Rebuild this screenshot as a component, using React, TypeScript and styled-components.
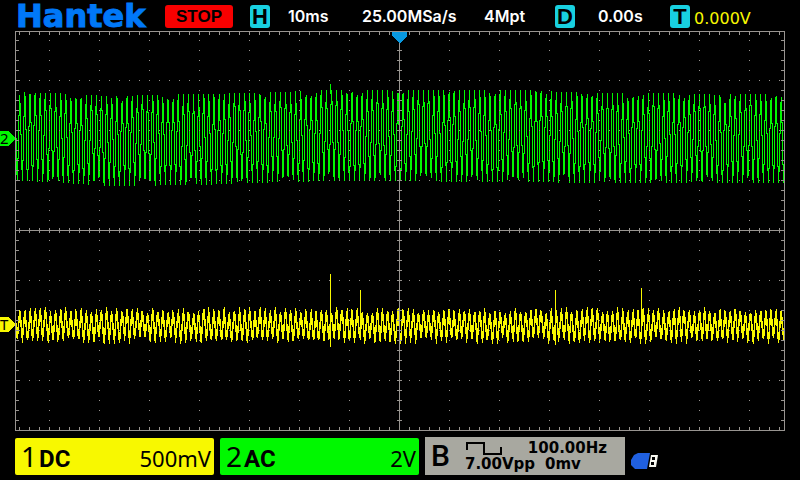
import React from "react";
import styled, { createGlobalStyle } from "styled-components";

const GlobalStyle = createGlobalStyle`
  * { box-sizing: border-box; }
  body { margin: 0; background: #000; }
  button { border: 0; margin: 0; padding: 0; cursor: pointer; }
`;

const Screen = styled.main`
  background: #000;
  color: #fff;
  font-family: Inter, sans-serif;
`;

const StatusBar = styled.header`
  display: grid;
  grid-template-columns: 149fr 85fr 38fr 74fr 122fr 71fr 43fr 72fr 24fr 106fr;
  align-items: center;
  justify-items: start;
  height: 30px;
  padding: 2px 0 0 16px;
  white-space: nowrap;
`;

const Brand = styled.span`
  color: #0078f8;
  font: bold 32px/40px "DejaVu Sans", sans-serif;
  -webkit-text-stroke: 1px #0078f8;
  margin: -6px 0;
`;

const RunButton = styled.button`
  width: 68px;
  height: 23px;
  border-radius: 3px;
  background: #f80000;
  color: #000;
  font: bold 17px/23px "Liberation Sans", sans-serif;
`;

const Badge = styled.span`
  width: 20px;
  height: 23px;
  border-radius: 3px;
  background: #18d0e0;
  color: #000;
  font: bold 22px/24px "Liberation Sans", sans-serif;
  display: flex;
  justify-content: center;
`;

const Reading = styled.span`
  font-size: 16px;
  font-weight: 600;
  line-height: 24px;
`;

const Level = styled.span`
  color: #f8f800;
  padding-top: 6px;
  font: 16px/20px "DejaVu Sans", sans-serif;
`;

const Plot = styled.svg`
  display: block;
  width: 100%;
  height: auto;
`;

const ChannelBar = styled.footer`
  display: grid;
  grid-template-columns: 199fr 199fr 200fr 163fr;
  gap: 6px;
  align-items: center;
  padding: 5px 6px 5px 15px;
`;

const Channel = styled.button<{ $color: string }>`
  display: flex;
  align-items: baseline;
  height: 37px;
  padding: 0 3px 0 6px;
  border-radius: 2px;
  background: ${(p) => p.$color};
  color: #000;
  font-family: "Noto Sans", sans-serif;
  line-height: 37px;
`;

const ChannelNumber = styled.span`
  font-size: 28px;
`;

const Coupling = styled.span`
  margin-left: 2px;
  font: bold 24px/37px "Liberation Sans Narrow", Roboto, sans-serif;
`;

const Scale = styled.span`
  margin-left: auto;
  font-size: 22px;
`;

const Generator = styled.section`
  display: flex;
  align-items: center;
  gap: 15px;
  height: 38px;
  padding-left: 6px;
  background: #a8a8a0;
  color: #000;
`;

const GeneratorName = styled.span`
  font: 500 30px/36px Roboto, sans-serif;
`;

const GeneratorInfo = styled.div`
  flex: 1;
  font: bold 15px/16px "DejaVu Sans", sans-serif;
  white-space: nowrap;
`;

const Frequency = styled.div`
  display: flex;
  justify-content: space-between;
  padding-right: 18px;
`;

const Output = styled.div`
  display: flex;
  gap: 10px;
`;

const UsbIcon = styled.svg`
  display: block;
  margin-top: 10px;
`;

const LEFT = 15;
const RIGHT = 784;
const PERIOD = 5.11;

const range = (from: number, to: number, step: number) => {
  const out: number[] = [];
  for (let v = from; v <= to; v += step) out.push(v);
  return out;
};

const noise = (x: number) => {
  const v = Math.sin(x * 127.1 + 11.7) * 43758.5453;
  return v - Math.floor(v);
};

const ENVELOPE = [
  [15, 92, 180], [50, 93, 181], [110, 96, 185], [200, 94, 184], [250, 93, 182],
  [330, 90, 180], [520, 90, 181], [590, 93, 182], [784, 94, 182],
];

const envelopeAt = (x: number) => {
  const i = Math.max(1, ENVELOPE.findIndex((e) => e[0] >= x));
  const a = ENVELOPE[i - 1];
  const b = ENVELOPE[i] || a;
  const t = Math.min(1, Math.max(0, (x - a[0]) / (b[0] - a[0])));
  return [a[1] + (b[1] - a[1]) * t, a[2] + (b[2] - a[2]) * t];
};

const carrier = (x: number) =>
  Math.max(-1, Math.min(1, 1.1 * Math.cos(((x - 19.3 + (noise(x + 900) - 0.5) * 0.3) * 2 * Math.PI) / PERIOD)));

const channel2 = (x: number) => {
  const [top, bottom] = envelopeAt(x);
  return (top + bottom) / 2 - (carrier(x) * (bottom - top)) / 2;
};

const channel1 = (x: number) =>
  325 - carrier(x) * 12 + (noise(x) - 0.5) * 7;

/* One vertical run per pixel column, from midpoint to midpoint of its neighbours. */
const trace = (sample: (x: number) => number, pad: number) =>
  range(LEFT + 1, RIGHT - 1, 1)
    .map((x) => {
      const y = sample(x);
      const before = (sample(x - 1) + y) / 2;
      const after = (sample(x + 1) + y) / 2;
      const top = Math.round(Math.min(before, y, after) - pad);
      const bottom = Math.round(Math.max(before, y, after) + pad);
      return `M${x} ${top}h1V${bottom + 1}h-1z`;
    })
    .join("");

const dot = (x: number, y: number, w = 1, h = 1) => `M${x} ${y}h${w}v${h}h${-w}z`;

const gridPath = [
  dot(15, 31, 770, 1), dot(15, 430, 770, 1), dot(15, 31, 1, 400), dot(784, 31, 1, 400),
  dot(399, 31, 1, 400), dot(15, 230, 770, 1),
  ...range(19, 779, 10).flatMap((x) => [
    dot(x, 32, 1, 3), dot(x, 427, 1, 3), dot(x, 228, 1, 5),
    ...[80, 130, 180, 280, 330, 380].map((y) => dot(x, y)),
  ]),
  ...range(40, 420, 10).flatMap((y) => [
    dot(16, y, 3, 1), dot(781, y, 3, 1), dot(397, y, 5, 1),
    ...range(49, 749, 50).map((x) => dot(x, y)),
  ]),
].join("");

const spikes = [dot(330, 274, 1, 73), dot(360, 290, 1, 50), dot(555, 290, 1, 55), dot(641, 288, 1, 50)].join("");

const Marker = ({ y, color, label }: { y: number; color: string; label: string }) => (
  <g>
    <path d={`M0 ${y - 7}h8l7 7v1l-7 7H0z`} fill={color} />
    <text x={0} y={y + 6} fontSize="15" fontFamily="Noto Sans, sans-serif" fill="#000">
      {label}
    </text>
  </g>
);

export default function App() {
  return (
    <>
      <GlobalStyle />
      <Screen>
        <StatusBar>
          <Brand>Hantek</Brand>
          <RunButton>STOP</RunButton>
          <Badge>H</Badge>
          <Reading>10ms</Reading>
          <Reading>25.00MSa/s</Reading>
          <Reading>4Mpt</Reading>
          <Badge>D</Badge>
          <Reading>0.00s</Reading>
          <Badge>T</Badge>
          <Level>0.000V</Level>
        </StatusBar>
        <Plot viewBox="0 30 800 402" role="img" aria-label="Waveforms" shapeRendering="crispEdges">
          <path d={trace(channel2, 0)} fill="#00f800" />
          <path d={dot(330, 84, 1, 10)} fill="#00f800" />
          <path d={trace(channel1, 3)} fill="#f8f800" />
          <path d={spikes} fill="#f8f800" />
          <path d={gridPath} fill="#989490" />
          <path d="M392 32h15v4l-7 7h-1l-7-7z" fill="#0898e0" />
          <Marker y={138} color="#00f800" label="2" />
          <Marker y={324} color="#f8f800" label="T" />
        </Plot>
        <ChannelBar>
          <Channel $color="#f8f800">
            <ChannelNumber>1</ChannelNumber>
            <Coupling>DC</Coupling>
            <Scale>500mV</Scale>
          </Channel>
          <Channel $color="#00f800">
            <ChannelNumber>2</ChannelNumber>
            <Coupling>AC</Coupling>
            <Scale>2V</Scale>
          </Channel>
          <Generator>
            <GeneratorName>B</GeneratorName>
            <GeneratorInfo>
              <Frequency>
                <svg width="38" height="16" viewBox="0 0 38 16" fill="none" stroke="#000" strokeWidth="2" aria-hidden="true">
                  <path d="M2 10V3h17v11h17V7" />
                </svg>
                <span>100.00Hz</span>
              </Frequency>
              <Output>
                <span>7.00Vpp</span>
                <span>0mv</span>
              </Output>
            </GeneratorInfo>
          </Generator>
          <UsbIcon width="28" height="18" viewBox="0 0 28 18" role="img" aria-label="USB drive">
            <path d="M7 1H19L16 17H4L0 13V8L3 3z" fill="#2060e0" />
            <path d="M20 3h7l-2 12h-7z" fill="#f8f8f0" />
            <path d="M21 5h3v3h-3zM20 10h3v3h-3z" fill="#000" />
          </UsbIcon>
        </ChannelBar>
      </Screen>
    </>
  );
}
